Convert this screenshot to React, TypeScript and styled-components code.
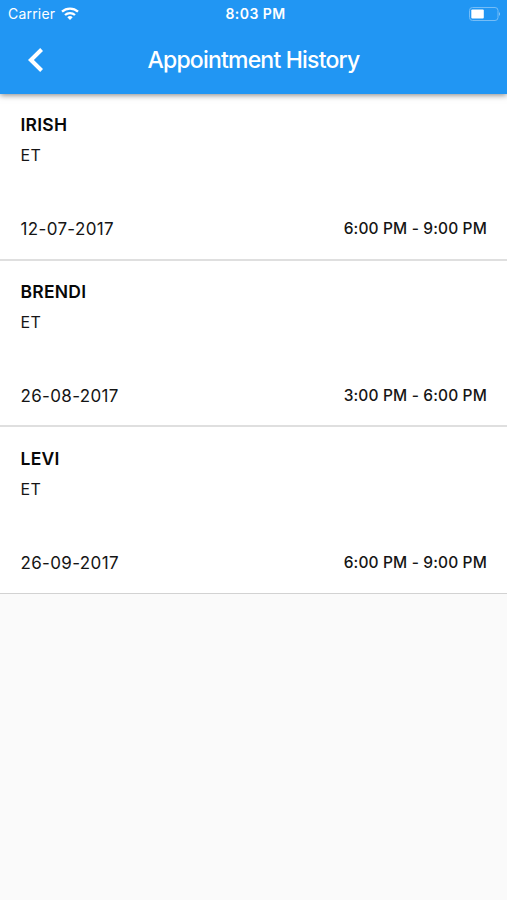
import React from "react";
import styled, { createGlobalStyle } from "styled-components";

const GlobalStyle = createGlobalStyle`
  * { box-sizing: border-box; }
  body { margin: 0; background: #fafafa; font-family: Inter, sans-serif; color: #151515; }
`;

const Screen = styled.main`
  height: 900px;
  background: #fafafa;
  overflow: hidden;
`;

const Header = styled.header`
  position: relative;
  height: 94px;
  background: #2196f3;
  color: #fff;
  box-shadow: 0 1px 6px rgba(0, 0, 0, 0.5);
`;

const StatusBar = styled.div`
  display: grid;
  grid-template-columns: 1fr auto 1fr;
  align-items: center;
  height: 27px;
  padding: 0 6px 0 8px;
`;

const Carrier = styled.div`
  display: flex;
  align-items: center;
  gap: 6px;
  font-size: 14px;
  letter-spacing: 0.2px;
  line-height: 27px;
  height: 27px;
`;

const Clock = styled.div`
  padding-left: 2px;
  font-size: 14px;
  font-weight: 600;
  letter-spacing: 0.45px;
  line-height: 27px;
`;

const BatteryIcon = styled.svg`
  justify-self: end;
  display: block;
`;

const NavBar = styled.div`
  display: grid;
  grid-template-columns: 60px 1fr 60px;
  align-items: center;
  height: 67px;
`;

const BackButton = styled.button`
  border: 0;
  padding: 0 0 2px 27px;
  background: none;
  color: inherit;
  display: flex;
`;

const Title = styled.h1`
  margin: 0;
  text-align: center;
  font-size: 23px;
  font-weight: 500;
  letter-spacing: -0.8px;
  line-height: 67px;
`;

const List = styled.ul`
  margin: 0;
  padding: 0;
  list-style: none;
`;

const Item = styled.li`
  display: flex;
  flex-direction: column;
  height: 166.7px;
  padding: 18.3px 20px 0 20.5px;
  background: #fff;
  border-bottom: 2px solid #dfdfdf;

  &:last-child {
    height: 166.6px;
    border-bottom: 1px solid #d2d2d2;
  }
`;

const Name = styled.div`
  font-size: 17.5px;
  font-weight: 600;
  letter-spacing: 0.25px;
  line-height: 25px;
  color: #080808;
`;

const Kind = styled.div`
  margin-top: 6px;
  font-size: 16px;
  letter-spacing: 0.4px;
  line-height: 25px;
`;

const Schedule = styled.div`
  display: flex;
  justify-content: space-between;
  margin-top: 49px;
  line-height: 25px;
`;

const DateText = styled.span`
  font-size: 17px;
  letter-spacing: 0.35px;
`;

const TimeText = styled.span`
  font-size: 15.5px;
  font-weight: 500;
  letter-spacing: 0.15px;
  line-height: 24px;
`;

const appointments = [
  { name: "IRISH", kind: "ET", date: "12-07-2017", time: "6:00 PM - 9:00 PM" },
  { name: "BRENDI", kind: "ET", date: "26-08-2017", time: "3:00 PM - 6:00 PM" },
  { name: "LEVI", kind: "ET", date: "26-09-2017", time: "6:00 PM - 9:00 PM" },
];

export default function App() {
  return (
    <Screen>
      <GlobalStyle />
      <Header>
        <StatusBar>
          <Carrier>
            <span>Carrier</span>
            <svg width="18" height="13" viewBox="0 0 18 13" fill="none" stroke="#fff" strokeWidth="2.3">
              <path d="M1 4.700C5.500.6 12.500.6 17 4.700M4 8C6.800 5.400 11.200 5.400 14 8" />
              <path d="M6.300 10.200Q9 8 11.700 10.200L9 13Z" fill="#fff" stroke="none" />
            </svg>
          </Carrier>
          <Clock>8:03 PM</Clock>
          <BatteryIcon width="32" height="14" viewBox="0 0 32 14">
            <rect x="0.500" y="0.500" width="28.500" height="13" rx="3" fill="none" stroke="#75bdf7" />
            <rect x="2.300" y="2.500" width="12.500" height="9" rx="1" fill="#fff" />
            <path d="M30 5Q32 7 30 9Z" fill="#8fcaf9" />
          </BatteryIcon>
        </StatusBar>
        <NavBar>
          <BackButton aria-label="Back">
            <svg width="17" height="26" viewBox="0 0 17 26" fill="#fff">
              <path d="M13.200 1L16 3.900L6.900 13L16 22.100L13.200 25L1 13Z" />
            </svg>
          </BackButton>
          <Title>Appointment History</Title>
        </NavBar>
      </Header>
      <List>
        {appointments.map((a) => (
          <Item key={a.name}>
            <Name>{a.name}</Name>
            <Kind>{a.kind}</Kind>
            <Schedule>
              <DateText>{a.date}</DateText>
              <TimeText>{a.time}</TimeText>
            </Schedule>
          </Item>
        ))}
      </List>
    </Screen>
  );
}
